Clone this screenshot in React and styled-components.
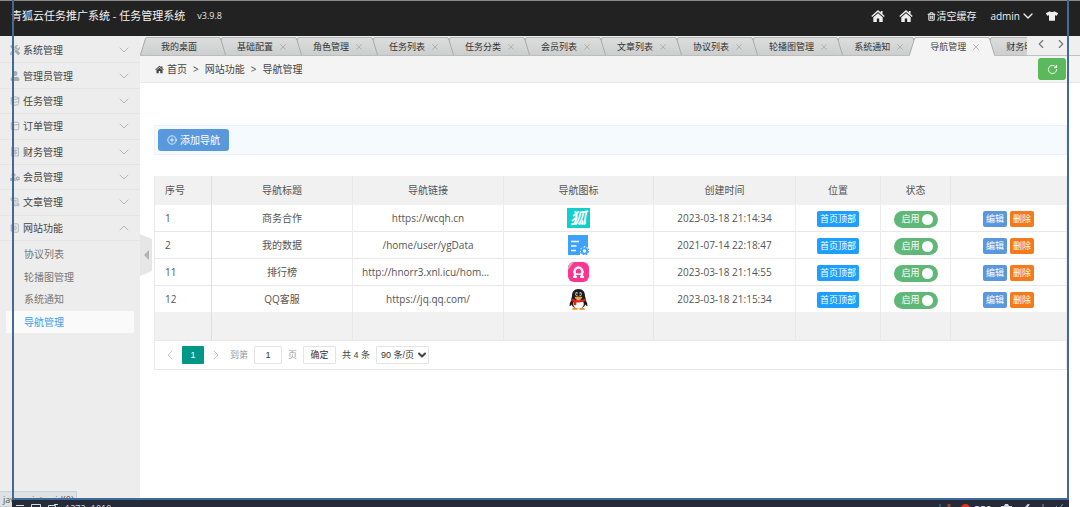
import React from "react";
import styled, { createGlobalStyle, css } from "styled-components";
import {
  FaTools, FaUser, FaUserCog, FaTshirt,
} from "react-icons/fa";
import {
  ChevronDown, ChevronUp, ChevronLeft, ChevronRight, X, RotateCw, CirclePlus,
  Database, PanelsTopLeft, Receipt, ScrollText, NotebookText, Trash2,
} from "lucide-react";

const GlobalStyle = createGlobalStyle`
  *, *::before, *::after { box-sizing: border-box; }
  body {
    margin: 0;
    background: #fff;
    color: #555;
    font: 10px/16px "Open Sans", "Noto Sans CJK SC", sans-serif;
    overflow: hidden;
  }
  button, input, select { font: inherit; margin: 0; padding: 0; border: 0; color: inherit; }
  button { cursor: pointer; }
  a { color: inherit; text-decoration: none; }
  svg { display: block; flex: none; }
`;

const Page = styled.div`
  min-height: 100vh;
  display: flex;
  flex-direction: column;
`;

const Header = styled.header`
  height: 36px;
  padding: 0 22px 5px 11px;
  display: flex;
  align-items: center;
  background: #222;
  border-top: 1px solid #8a8a8a;
  color: #fff;
`;

const Brand = styled.a`
  font-size: 11px;
  color: #f2f2f2;
`;

const Version = styled.span`
  margin-left: 12px;
  font-size: 9px;
  color: #e4e4e4;
`;

const HeaderLinks = styled.nav`
  margin-left: auto;
  display: flex;
  align-items: center;
  gap: 14px;
  color: #eee;
`;

const HeaderLink = styled.a`
  display: flex;
  align-items: center;
`;

const HeaderMenu = styled(HeaderLink)`
  margin-right: -4px;
`;

const Body = styled.div`
  flex: 1;
  display: flex;
`;

const Sidebar = styled.aside`
  flex: none;
  width: 140px;
  padding-top: 2px;
  background: #ededed;
`;

const MenuList = styled.div`
  height: 203px;
  display: grid;
  grid-auto-rows: 1fr;
`;

const MenuItem = styled.button`
  display: flex;
  align-items: center;
  gap: 3px;
  padding: 0 8px 0 10px;
  background: none;
  border-bottom: 1px solid #e5e5e5;
  color: #444;
  text-align: left;

  > svg:first-child { color: #a3abb3; }
  > svg:last-child { margin-left: auto; color: #999; }
`;

const SubMenu = styled.div`
  height: 92px;
  padding: 2px 6px 0;
  display: grid;
  grid-auto-rows: 1fr;
`;

const SubLink = styled.a`
  display: flex;
  align-items: center;
  padding-left: 18px;
  color: ${(p) => (p.$active ? "#3a9cf0" : "#777")};
  background: ${(p) => (p.$active ? "#fafafa" : "none")};
`;

const Main = styled.main`
  position: relative;
  flex: 1;
  min-width: 0;
`;

const TabBar = styled.div`
  display: flex;
  height: 20px;
  background: #efefef;
  box-shadow: inset 0 -1px #c2c2c2;
`;

const TabStrip = styled.div`
  flex: 1;
  min-width: 0;
  display: flex;
  padding-top: 1px;
  overflow: hidden;
`;

const TabBox = styled.div`
  position: relative;
  z-index: ${(p) => p.$level};
  flex: none;
  display: flex;
  height: 19px;
  font-size: 9px;
  color: ${(p) => (p.$active ? "#444" : "#333")};
  & + & { margin-left: -10px; }
`;

const TabBody = styled.div`
  min-width: 72px;
  display: flex;
  align-items: center;
  gap: 5px;
  padding: 0 7px 0 14px;
  border: solid #b4b6b6;
  border-width: 1px 0;
  ${(p) => p.$active
    ? css`background: #f4f4f4; border-bottom-color: #f4f4f4;`
    : css`background: linear-gradient(#dcdddd, #cdcece); border-bottom-color: #bdbdbd;`}
`;

const TabClose = styled.button`
  background: none;
  color: #aaa;
`;

const TabPager = styled.div`
  flex: none;
  width: 53px;
  display: flex;
  gap: 6px;
  padding: 1px 0 0 7px;
  color: #777;
`;

const PagerArrow = styled.button`
  width: 14px;
  height: 14px;
  background: none;
`;

const Crumbs = styled.div`
  height: 27px;
  display: flex;
  align-items: center;
  gap: 6px;
  padding: 0 14px 0 15px;
  background: #f4f4f4;
  border-bottom: 1px solid #e8e8e8;
  color: #444;
`;

const CrumbHome = styled.a`
  display: flex;
  align-items: center;
  gap: 3px;
`;

const RefreshButton = styled.button`
  width: 28px;
  height: 22px;
  margin-left: auto;
  display: grid;
  place-items: center;
  border-radius: 3px;
  background: #5cb85c;
  color: #fff;
`;

const Content = styled.section`
  padding: 42px 13px 0 14px;
`;

const ActionBar = styled.div`
  height: 30px;
  display: flex;
  align-items: center;
  padding: 0 4px;
  margin-bottom: 21px;
  background: #f5fafe;
  box-shadow: inset 0 0 0 1px #ecf1f5;
`;

const AddButton = styled.button`
  height: 22px;
  display: flex;
  align-items: center;
  gap: 3px;
  padding: 0 9px;
  border-radius: 3px;
  background: #5a98de;
  color: #fff;
`;

const Table = styled.table`
  width: 100%;
  table-layout: fixed;
  border-collapse: separate;
  border-spacing: 0;
  border-left: 1px solid #e8e8e8;

  th, td {
    height: 27px;
    padding: 0;
    text-align: center;
    font-weight: 400;
    white-space: nowrap;
    border-right: 1px solid #ececec;
    border-bottom: 1px solid #e8e8e8;
  }
  th { height: 29px; }
  th, tfoot td { background: #f1f1f1; border-color: #e8e8e8; }
  th { border-bottom-color: #f1f1f1; }
  th:first-child, td:first-child {
    padding-left: 10px;
    text-align: left;
    border-right-color: #dcdfe2;
  }
  tbody tr:last-child td { border-bottom-color: #f1f1f1; }
  tfoot td { height: 28px; }
`;

const Column = styled.col`
  width: ${(p) => (p.$w ? `${p.$w}px` : "auto")};
`;

const LinkText = styled.div`
  padding: 0 9px;
  overflow: hidden;
  text-overflow: ellipsis;
`;

const Picture = styled.div`
  display: grid;
  place-items: center;
`;

const CellLine = styled.div`
  display: flex;
  align-items: center;
  justify-content: center;
  gap: 3px;
  padding-top: 2px;
`;

const Tag = styled.span`
  padding: 0 2px;
  border: 1px solid transparent;
  line-height: 14px;
  border-radius: 2px;
  background: #1e9fff;
  color: #fff;
  font-size: 9px;
`;

const Switch = styled.label`
  width: 44px;
  height: 17px;
  display: flex;
  align-items: center;
  justify-content: space-between;
  padding: 0 5px 0 8px;
  border-radius: 9px;
  background: #5fb878;
  color: #fff;
  font-size: 9px;

  input {
    appearance: none;
    width: 11px;
    height: 11px;
    border-radius: 50%;
    background: #fff;
  }
`;

const RowButton = styled.button`
  width: 24px;
  height: 16px;
  border-radius: 2px;
  background: ${(p) => (p.$danger ? "#f37b1d" : "#5a98de")};
  color: #fff;
  font-size: 9px;
  line-height: 16px;
`;

const Pagination = styled.div`
  height: 29px;
  display: flex;
  align-items: center;
  padding: 0 7px;
  gap: 6px;
  border: 1px solid #e8e8e8;
  border-top: 0;
  font-family: "Liberation Sans", "Noto Sans CJK SC", sans-serif;
  font-size: 9px;
  color: #444;
`;

const PageSteps = styled.div`
  display: flex;
  align-items: center;
  gap: 4px;
`;

const PageStep = styled.button`
  width: 16px;
  background: none;
  color: #aaa;
`;

const PageCurrent = styled.button`
  width: 22px;
  height: 18px;
  border-radius: 1px;
  background: #009688;
  color: #fff;
`;

const PageJump = styled.label`
  display: flex;
  align-items: center;
  gap: 6px;
  color: #999;
`;

const boxed = css`
  height: 18px;
  border: 1px solid #e4e4e4;
  border-radius: 1px;
  background: #fff;
  color: #333;
`;

const PageInput = styled.input`
  ${boxed}
  width: 28px;
  text-align: center;
`;

const PageConfirm = styled.button`
  ${boxed}
  width: 33px;
`;

const PageSize = styled.div`
  display: grid;
  align-items: center;

  > * { grid-area: 1 / 1; }

  select {
    ${boxed}
    appearance: none;
    width: 53px;
    padding-left: 4px;
  }

  svg {
    justify-self: end;
    margin-right: 1px;
    pointer-events: none;
  }
`;

const Collapser = styled.button`
  position: absolute;
  left: 0;
  top: 198px;
  background: none;
`;

const StatusTip = styled.div`
  position: fixed;
  left: 0;
  bottom: 0;
  width: 77px;
  height: 16px;
  padding-left: 3px;
  border: 1px solid #cfd2d5;
  border-left: 0;
  background: #dfe2e5;
  font-size: 9px;
  color: #555;
`;

const CaptureFrame = styled.div`
  position: fixed;
  inset: 0 11px 7px 12px;
  border: solid #426a98;
  border-width: 0 2px 2px;
  pointer-events: none;
  z-index: 40;
`;

const CaptureBar = styled.div`
  position: fixed;
  left: 12px;
  right: 11px;
  bottom: 0;
  height: 7px;
  padding: 4px 6px 0 4px;
  display: flex;
  align-items: flex-start;
  gap: 7px;
  overflow: hidden;
  background: #252b38;
  color: #d5d9e0;
  font-size: 9px;
  z-index: 30;
`;

const CaptureText = styled.span`
  line-height: 10px;
  ${(p) => p.$bold && css`font-weight: 700;`}
`;

const CaptureTools = styled.div`
  margin-left: auto;
  display: flex;
  align-items: flex-start;
  gap: 10px;
`;

const Recording = styled.div`
  display: flex;
  gap: 4px;
`;

const HomeGlyph = ({ size }) => (
  <svg width={size} height={size} viewBox="0 0 14 14" fill="currentColor">
    <path d="M7 1 0.300 7l.9 1L7 3l5.800 5 .9-1-2.200-2V2H9.800v1.500z" />
    <path d="M7 4.200 2.300 8.200V13h3.500V9.500h2.400V13h3.500V8.200z" />
  </svg>
);

const Slope = ({ flip, active }) => (
  <svg width="7" height="19" viewBox="0 0 7 19">
    <defs>
      <linearGradient id="tabFill" x1="0" y1="0" x2="0" y2="1">
        <stop offset="0" stopColor="#dcdddd" />
        <stop offset="1" stopColor="#cdcece" />
      </linearGradient>
    </defs>
    <g transform={flip ? "matrix(-1 0 0 1 7 0)" : undefined}>
      <path d="M0 19 5 3Q5.600 .5 7 .5V19z" fill={active ? "#f4f4f4" : "url(#tabFill)"} />
      <path d="M.3 18.500 5 3Q5.600 .5 7 .5" fill="none" stroke="#a8aaaa" />
      {!active && <path d="M.5 18.500H7" stroke="#bdbdbd" />}
    </g>
  </svg>
);

const Tab = ({ title, active, closable, level }) => (
  <TabBox $level={level} $active={active}>
    <Slope active={active} />
    <TabBody $active={active}>
      {title}
      {closable && <TabClose aria-label={`关闭${title}`}><X size={10} strokeWidth={2} /></TabClose>}
    </TabBody>
    <Slope flip active={active} />
  </TabBox>
);

const FoxIcon = () => (
  <svg width="23" height="20" viewBox="0 0 23 20">
    <rect width="23" height="20" fill="#12cfcf" />
    <text x="11" y="16" textAnchor="middle" fontSize="16" fontWeight="700" fontStyle="italic" fill="#fff" fontFamily="Noto Sans CJK SC, sans-serif">狐</text>
  </svg>
);

const DataIcon = () => (
  <svg width="21" height="20" viewBox="0 0 21 20">
    <path d="M0 0h20v13l-3-2-5 3v6H0z" fill="#3da2ff" />
    <path d="M0 12h12v8H0z" fill="#3da2ff" />
    <path d="M3 6.500h8M3 11h5.500M3 15.500h5" stroke="#fff" strokeWidth="1.300" />
    <circle cx="16.500" cy="16" r="2.700" fill="none" stroke="#3da2ff" strokeWidth="1.800" />
    <circle cx="16.500" cy="16" r="4" fill="none" stroke="#3da2ff" strokeWidth="1.300" strokeDasharray="1.600 1.540" />
  </svg>
);

const RankIcon = () => (
  <svg width="21" height="20" viewBox="0 0 21 20">
    <rect width="21" height="20" rx="6" fill="#ff3392" />
    <path d="M0 8V6a6 6 0 0 1 6-6z" fill="#d9a9a4" />
    <path d="M7 15v-3.500a4 4 0 1 1 7 0V15" fill="none" stroke="#fff" strokeWidth="2.400" />
    <path d="M5 15h3.800M12.200 15H16" stroke="#fff" strokeWidth="2" />
    <path d="M8 12.200h5" stroke="#fff" strokeWidth="1.600" />
  </svg>
);

const PenguinIcon = () => (
  <svg width="19" height="21" viewBox="0 0 19 21">
    <path d="M3.500 10Q.3 13.500.6 17q1.200.3 2.400-2zM15.500 10q3.200 3.500 2.900 7-1.200.3-2.400-2z" fill="#151515" />
    <path d="M9.500 0C5 0 3 3 3 7l-1.200 5c0 4.500 2.700 7.500 7.700 7.500s7.700-3 7.700-7.500L16 7c0-4-2-7-6.500-7z" fill="#1c1c1c" />
    <ellipse cx="9.500" cy="15" rx="5.300" ry="4.700" fill="#fff" />
    <ellipse cx="7.600" cy="5" rx="1.400" ry="2" fill="#ccc" />
    <ellipse cx="11.400" cy="5" rx="1.400" ry="2" fill="#ccc" />
    <circle cx="8" cy="5.200" r=".9" fill="#111" />
    <circle cx="11" cy="5.200" r=".9" fill="#111" />
    <ellipse cx="9.500" cy="8.700" rx="3.800" ry="1.300" fill="#f6a21b" />
    <path d="M2.500 9.500q7 3.500 14 0l.5 2q-4 2.300-9.500 1.800l-.3 3-2.400-.4.200-3.200-3-1z" fill="#e2231a" />
    <path d="M3 19.800q2.500-2 5.500-.3v1.200H3.500zM10.500 19.500q3-1.700 5.500.3l-.5.9h-5z" fill="#f08a1b" />
  </svg>
);

const menu = [
  ["系统管理", FaTools],
  ["管理员管理", FaUser],
  ["任务管理", Database],
  ["订单管理", PanelsTopLeft],
  ["财务管理", Receipt],
  ["会员管理", FaUserCog],
  ["文章管理", ScrollText],
  ["网站功能", NotebookText],
];

const subMenu = ["协议列表", "轮播图管理", "系统通知", "导航管理"];

const tabs = [
  "我的桌面", "基础配置", "角色管理", "任务列表", "任务分类", "会员列表",
  "文章列表", "协议列表", "轮播图管理", "系统通知", "导航管理", "财务明细",
];

const columns = [
  ["序号", 57], ["导航标题", 141], ["导航链接", 151], ["导航图标", 150],
  ["创建时间", 142], ["位置", 85], ["状态", 70], ["", 0],
];

const rows = [
  [1, "商务合作", "https://wcqh.cn", FoxIcon, "2023-03-18 21:14:34"],
  [2, "我的数据", "/home/user/ygData", DataIcon, "2021-07-14 22:18:47"],
  [11, "排行榜", "http://hnorr3.xnl.icu/home/index", RankIcon, "2023-03-18 21:14:55"],
  [12, "QQ客服", "https://jq.qq.com/", PenguinIcon, "2023-03-18 21:15:34"],
];

export default function App() {
  return (
    <Page>
      <GlobalStyle />
      <Header>
        <Brand href="#">青狐云任务推广系统 - 任务管理系统</Brand>
        <Version>v3.9.8</Version>
        <HeaderLinks>
          <HeaderLink href="#" aria-label="前台首页"><HomeGlyph size={14} /></HeaderLink>
          <HeaderLink href="#" aria-label="首页"><HomeGlyph size={14} /></HeaderLink>
          <HeaderLink href="#"><Trash2 size={9} strokeWidth={3} />清空缓存</HeaderLink>
          <HeaderMenu href="#">admin<ChevronDown size={16} strokeWidth={2} /></HeaderMenu>
          <HeaderLink href="#" aria-label="换肤"><FaTshirt size={12} /></HeaderLink>
        </HeaderLinks>
      </Header>
      <Body>
        <Sidebar>
          <MenuList>
            {menu.map(([label, Icon]) => (
              <MenuItem key={label}>
                <Icon size={10} />
                {label}
                {label === "网站功能"
                  ? <ChevronUp size={16} strokeWidth={1} />
                  : <ChevronDown size={16} strokeWidth={1} />}
              </MenuItem>
            ))}
          </MenuList>
          <SubMenu>
            {subMenu.map((label) => (
              <SubLink key={label} href="#" $active={label === "导航管理"}>{label}</SubLink>
            ))}
          </SubMenu>
        </Sidebar>
        <Main>
          <TabBar>
            <TabStrip>
              {tabs.map((title, i) => (
                <Tab
                  key={title}
                  title={title}
                  active={title === "导航管理"}
                  closable={i > 0}
                  level={title === "导航管理" ? 20 : tabs.length - i}
                />
              ))}
            </TabStrip>
            <TabPager>
              <PagerArrow aria-label="向左"><ChevronLeft size={14} /></PagerArrow>
              <PagerArrow aria-label="向右"><ChevronRight size={14} /></PagerArrow>
            </TabPager>
          </TabBar>
          <Crumbs>
            <CrumbHome href="#"><HomeGlyph size={9} />首页</CrumbHome>
            <span>&gt;</span>
            <span>网站功能</span>
            <span>&gt;</span>
            <span>导航管理</span>
            <RefreshButton aria-label="刷新"><RotateCw size={11} /></RefreshButton>
          </Crumbs>
          <Content>
            <ActionBar>
              <AddButton><CirclePlus size={10} />添加导航</AddButton>
            </ActionBar>
            <Table>
              <colgroup>
                {columns.map(([name, w]) => <Column key={name} $w={w} />)}
              </colgroup>
              <thead>
                <tr>{columns.map(([name]) => <th key={name}>{name}</th>)}</tr>
              </thead>
              <tbody>
                {rows.map(([id, title, url, Icon, time]) => (
                  <tr key={id}>
                    <td>{id}</td>
                    <td>{title}</td>
                    <td><LinkText>{url}</LinkText></td>
                    <td><Picture><Icon /></Picture></td>
                    <td>{time}</td>
                    <td><CellLine><Tag>首页顶部</Tag></CellLine></td>
                    <td>
                      <CellLine>
                        <Switch>启用<input type="checkbox" defaultChecked /></Switch>
                      </CellLine>
                    </td>
                    <td>
                      <CellLine>
                        <RowButton>编辑</RowButton>
                        <RowButton $danger>删除</RowButton>
                      </CellLine>
                    </td>
                  </tr>
                ))}
              </tbody>
              <tfoot>
                <tr>{columns.map(([name]) => <td key={name} />)}</tr>
              </tfoot>
            </Table>
            <Pagination>
              <PageSteps>
                <PageStep aria-label="上一页"><ChevronLeft size={16} strokeWidth={1} /></PageStep>
                <PageCurrent>1</PageCurrent>
                <PageStep aria-label="下一页"><ChevronRight size={16} strokeWidth={1} /></PageStep>
              </PageSteps>
              <PageJump>到第<PageInput type="text" defaultValue="1" />页</PageJump>
              <PageConfirm>确定</PageConfirm>
              <span>共 4 条</span>
              <PageSize>
                <select aria-label="每页条数" defaultValue="90">
                  <option value="90">90 条/页</option>
                </select>
                <ChevronDown size={12} strokeWidth={4} />
              </PageSize>
            </Pagination>
          </Content>
          <Collapser aria-label="收起菜单">
            <svg width="13" height="42" viewBox="0 0 13 42">
              <path d="M0 0 12 5v32L0 42z" fill="#e6e6e6" />
              <path d="M4 21 9 16v10z" fill="#b2b2b2" />
            </svg>
          </Collapser>
        </Main>
      </Body>
      <StatusTip>javascript:void(0)</StatusTip>
      <CaptureBar>
        <svg width="8" height="8" viewBox="0 0 8 8" stroke="currentColor"><path d="M0 1.500h8M0 4.500h8" /></svg>
        <svg width="10" height="8" viewBox="0 0 10 8" fill="none" stroke="currentColor"><path d="M.5.500h9v7h-9z" /></svg>
        <svg width="10" height="8" viewBox="0 0 10 8" fill="none" stroke="currentColor"><path d="M.5 1.500h7v6h-7zM6 .500h4" /></svg>
        <CaptureText>1272×1010</CaptureText>
        <CaptureTools>
          <svg width="12" height="8" viewBox="0 0 12 8"><path d="M1 0v6" stroke="#31557c" strokeWidth="2" /><path d="M10 0v6" stroke="#8a4f33" strokeWidth="3" /></svg>
          <Recording>
            <svg width="9" height="9" viewBox="0 0 9 9"><circle cx="4.500" cy="4.500" r="4.500" fill="#e2341d" /></svg>
            <CaptureText $bold>REC</CaptureText>
          </Recording>
          <svg width="11" height="8" viewBox="0 0 11 8" fill="#d5d9e0"><path d="M0 2h3l1-2h3l1 2h3v6H0z" /></svg>
          <svg width="8" height="8" viewBox="0 0 8 8" stroke="#d5d9e0" strokeWidth="2"><path d="M7 0 1 7" /></svg>
          <svg width="6" height="8" viewBox="0 0 6 8" stroke="#8d94a0"><path d="M3 0v8" /></svg>
          <svg width="7" height="8" viewBox="0 0 7 8" stroke="#8d94a0"><path d="m0 2 3 3 4-5" fill="none" /></svg>
        </CaptureTools>
      </CaptureBar>
      <CaptureFrame />
    </Page>
  );
}
